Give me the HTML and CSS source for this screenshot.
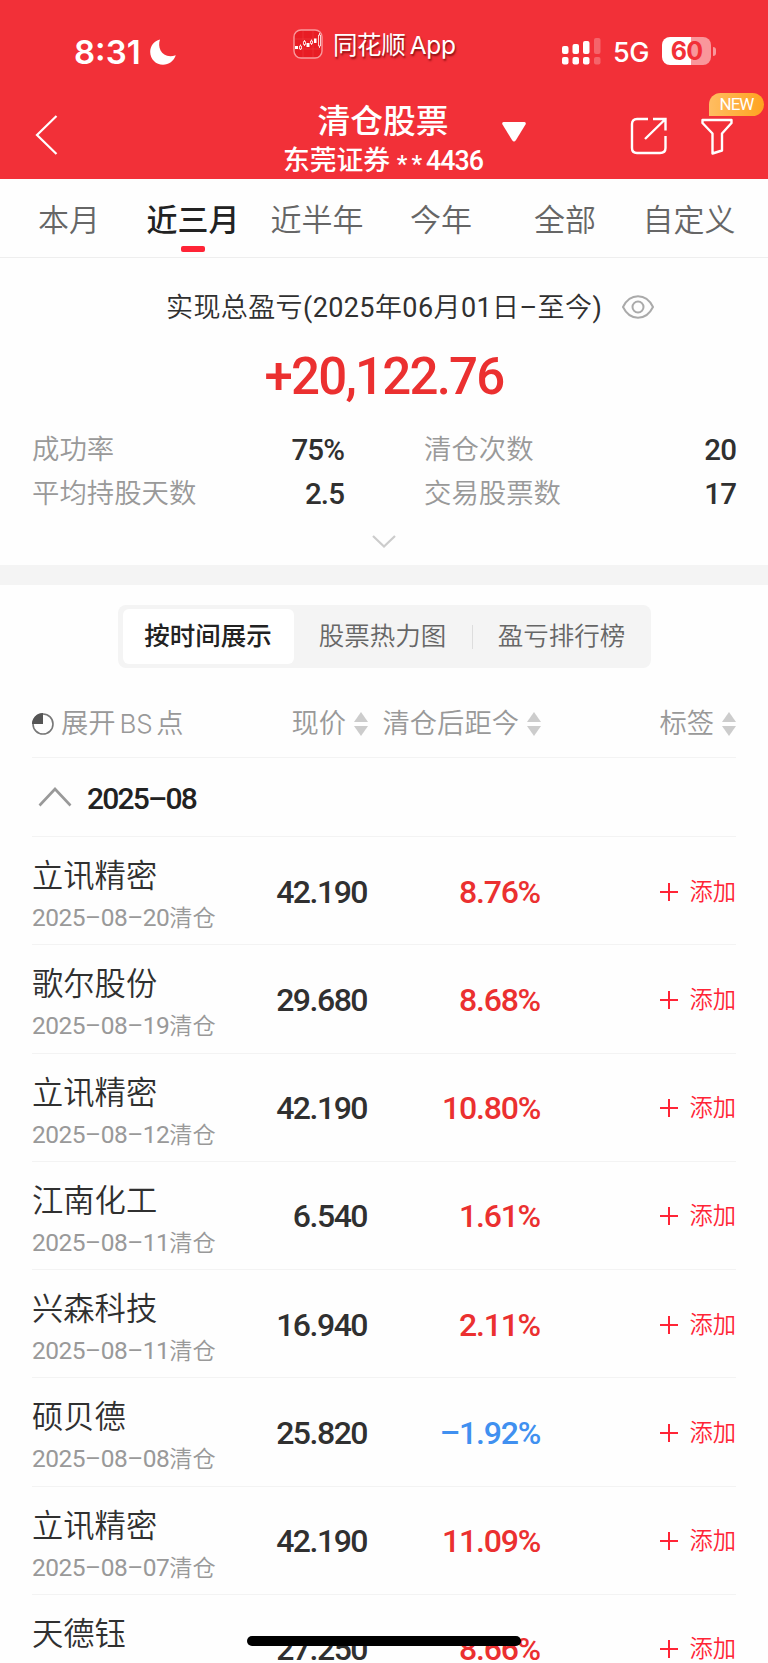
FILE: index.html
```
<!DOCTYPE html>
<html lang="zh-CN">

<head>
  <meta charset="UTF-8">
  <meta name="viewport" content="width=device-width, initial-scale=1.0">
  <title>清仓股票</title>
  <link rel="stylesheet" href="styles.css">
</head>

<body>
  <div class="page">
    <header class="header">
      <div class="status-bar">
        <div class="status-left">
          <span class="time">8:31</span>
          <svg class="moon" width="26" height="26" viewBox="0 0 26 26">
            <path d="M10 0.5C7 8.5 12 20.5 25.8 16.3C23.8 22.2 18.8 25.8 13 25.8C6 25.8 0.2 20.2 0.2 13C0.2 7 4 2 10 0.5Z" fill="#fff" />
          </svg>
        </div>
        <div class="app-mark">
          <svg width="30" height="30" viewBox="0 0 30 30" fill="none">
            <rect x="1" y="1" width="28" height="28" rx="7" fill="#e81c24" stroke="#f9999c" stroke-width="1.4" />
            <path d="M2 10H28M2 20H28M10 2V28M20 2V28" stroke="#ef3c42" stroke-width=".6" />
            <path d="M2 17h3v3h-3zM13.500 14h3v4h-3zM21 9.500h2.500v4.500h-2.500z" fill="#fff" />
            <path d="M7.500 15.500V21M11.500 11V17M18.500 10.500V16M26.500 4V19" stroke="#fff" stroke-width=".8" />
            <path d="M6.500 17h2v3h-2zM10.500 12.500h2v3h-2zM17.500 12h2v2.500h-2zM25.500 6h2v11h-2z" fill="#e81c24" stroke="#fff" stroke-width=".8" />
          </svg>
          <span class="app-name">同花顺 App</span>
        </div>
        <div class="status-right">
          <svg width="39" height="28" viewBox="0 0 39 28" fill="#fff">
            <rect x="0" y="9" width="6.500" height="8" rx="2" />
            <rect x="10.500" y="7" width="6.500" height="10" rx="2" />
            <rect x="21" y="4" width="6.500" height="13" rx="2" />
            <rect x="0" y="20" width="6.500" height="7.500" rx="2" />
            <rect x="10.500" y="20" width="6.500" height="7.500" rx="2" />
            <rect x="21" y="20" width="6.500" height="7.500" rx="2" />
            <g opacity=".25">
              <rect x="32" y="1" width="6.500" height="16" rx="2" />
              <rect x="32" y="20" width="6.500" height="7.500" rx="2" />
            </g>
          </svg>
          <span class="network">5G</span>
          <div class="battery">60</div>
          <div class="battery-cap"></div>
        </div>
      </div>

      <div class="nav-bar">
        <svg class="back" width="23" height="40" viewBox="0 0 23 40" fill="none" stroke="#fff" stroke-width="2.2">
          <path d="M21.500 1L2 20L21.500 39" />
        </svg>
        <div class="nav-title">
          <h1>清仓股票</h1>
          <p>东莞证券 <span class="stars">**</span><span class="account">4436</span></p>
        </div>
        <svg class="dropdown" width="24" height="20" viewBox="0 0 24 20">
          <path d="M1.500 0H22.500Q24.500 .5 23.500 2.500L14 18Q12 21 10 18L.5 2.500Q-.5 .5 1.500 0Z" fill="#fff" />
        </svg>
        <svg class="share" width="38" height="38" viewBox="0 0 38 38" fill="none" stroke="#fff" stroke-width="2.4">
          <path d="M18 2H7Q2 2 2 7V31Q2 36 7 36H30Q35.500 36 35.500 31V19M23 2H35.500V13.500M35 2.500L15 22" />
        </svg>
        <div class="filter">
          <svg width="32" height="37" viewBox="0 0 32 37" fill="none" stroke="#fff" stroke-width="2.4" stroke-linejoin="round">
            <path d="M1.500 2H30.500V5L21 15.500V32.500L11.500 35.500V15.500L1.500 5Z" />
          </svg>
          <span class="badge">NEW</span>
        </div>
      </div>
    </header>

    <nav class="tabs">
      <div class="tab">本月</div>
      <div class="tab active">近三月</div>
      <div class="tab">近半年</div>
      <div class="tab">今年</div>
      <div class="tab">全部</div>
      <div class="tab">自定义</div>
    </nav>

    <section class="summary">
      <div class="summary-label">
        <span class="summary-text">实现总盈亏<i>(2025</i>年<i>06</i>月<i>01</i>日<i>–</i>至今<i>)</i></span>
        <svg width="32" height="24" viewBox="0 0 32 24" fill="none" stroke="#aaa" stroke-width="2">
          <path d="M1 12C8 -2.300 24 -2.300 31 12C24 26.300 8 26.300 1 12Z" />
          <circle cx="16" cy="12" r="5.500" />
        </svg>
      </div>
      <div class="total">+20,122.76</div>
      <div class="stats">
        <div class="stat"><span>成功率</span><b>75%</b></div>
        <div class="stat"><span>清仓次数</span><b>20</b></div>
        <div class="stat"><span>平均持股天数</span><b>2.5</b></div>
        <div class="stat"><span>交易股票数</span><b>17</b></div>
      </div>
      <svg class="more" width="24" height="13" viewBox="0 0 24 13" fill="none" stroke="#ccc" stroke-width="2.2">
        <path d="M1 1L12 11.500L23 1" />
      </svg>
    </section>

    <section class="records">
      <div class="segment">
        <div class="segment-item selected">按时间展示</div>
        <div class="segment-item">股票热力图</div>
        <div class="segment-line"></div>
        <div class="segment-item">盈亏排行榜</div>
      </div>

      <div class="row table-head">
        <div class="expand">
          <svg width="22" height="22" viewBox="0 0 22 22">
            <circle cx="11" cy="11" r="10" fill="none" stroke="#777" stroke-width="1.6" />
            <path d="M11 11V0A11 11 0 0 0 0 11Z" fill="#555" />
          </svg>
          <span class="expand-text">展开<i>BS</i>点</span>
        </div>
        <div class="sortable">现价<span class="sort"></span></div>
        <div class="sortable">清仓后距今<span class="sort"></span></div>
        <div class="sortable">标签<span class="sort"></span></div>
      </div>

      <div class="month">
        <svg width="34" height="20" viewBox="0 0 34 20" fill="none" stroke="#999" stroke-width="2.6">
          <path d="M1.500 18.500L17 2L32.500 18.500" />
        </svg>
        <span>2025–08</span>
      </div>

      <div class="row stock">
        <div>
          <div class="name">立讯精密</div>
          <div class="date">2025–08–20<span>清仓</span></div>
        </div>
        <div class="num">42.190</div>
        <div class="num up">8.76%</div>
        <div class="add"><span class="plus"></span>添加</div>
      </div>
      <div class="row stock">
        <div>
          <div class="name">歌尔股份</div>
          <div class="date">2025–08–19<span>清仓</span></div>
        </div>
        <div class="num">29.680</div>
        <div class="num up">8.68%</div>
        <div class="add"><span class="plus"></span>添加</div>
      </div>
      <div class="row stock">
        <div>
          <div class="name">立讯精密</div>
          <div class="date">2025–08–12<span>清仓</span></div>
        </div>
        <div class="num">42.190</div>
        <div class="num up">10.80%</div>
        <div class="add"><span class="plus"></span>添加</div>
      </div>
      <div class="row stock">
        <div>
          <div class="name">江南化工</div>
          <div class="date">2025–08–11<span>清仓</span></div>
        </div>
        <div class="num">6.540</div>
        <div class="num up">1.61%</div>
        <div class="add"><span class="plus"></span>添加</div>
      </div>
      <div class="row stock">
        <div>
          <div class="name">兴森科技</div>
          <div class="date">2025–08–11<span>清仓</span></div>
        </div>
        <div class="num">16.940</div>
        <div class="num up">2.11%</div>
        <div class="add"><span class="plus"></span>添加</div>
      </div>
      <div class="row stock">
        <div>
          <div class="name">硕贝德</div>
          <div class="date">2025–08–08<span>清仓</span></div>
        </div>
        <div class="num">25.820</div>
        <div class="num down">–1.92%</div>
        <div class="add"><span class="plus"></span>添加</div>
      </div>
      <div class="row stock">
        <div>
          <div class="name">立讯精密</div>
          <div class="date">2025–08–07<span>清仓</span></div>
        </div>
        <div class="num">42.190</div>
        <div class="num up">11.09%</div>
        <div class="add"><span class="plus"></span>添加</div>
      </div>
      <div class="row stock">
        <div>
          <div class="name">天德钰</div>
        </div>
        <div class="num">27.250</div>
        <div class="num up">8.66%</div>
        <div class="add"><span class="plus"></span>添加</div>
      </div>
    </section>

    <div class="home-bar"></div>
  </div>
</body>

</html>
```
FILE: styles.css
```
* {
  box-sizing: border-box;
}

body {
  margin: 0;
  background-color: #fff;
  color: #303030;
  font-family: Roboto, "Noto Sans CJK SC", sans-serif;
}

svg {
  display: block;
  flex-shrink: 0;
}

.page {
  position: relative;
  width: 768px;
  height: 1663px;
  overflow: hidden;
  background-color: #fefefe;
}

/* header */
.header {
  height: 179px;
  background-color: #f23038;
  color: #fff;
}

.status-bar {
  display: flex;
  height: 85px;
}

.status-left {
  display: flex;
  width: 293px;
  padding: 31px 0 0 74px;
}

.time {
  width: 76px;
  font: 600 33px/42px Inter, sans-serif;
}

.moon {
  margin-top: 8px;
}

.app-mark {
  display: flex;
  width: 269px;
  padding-top: 29px;
}

.app-name {
  margin-left: 10px;
  font: 24.5px/32px Inter, "Noto Sans CJK SC", sans-serif;
  letter-spacing: -0.4px;
  word-spacing: -2px;
  text-shadow: 1px 2px 2px rgba(90, 0, 0, 0.7);
  white-space: nowrap;
}

.status-right {
  display: flex;
  align-items: center;
  height: 28px;
  margin-top: 37px;
}

.network {
  width: 48px;
  margin-left: 12px;
  margin-right: 1px;
  padding-top: 3px;
  font: 500 27px/28px Inter, sans-serif;
  letter-spacing: -0.4px;
}

.battery {
  width: 49px;
  height: 28px;
  border-radius: 8px;
  background: linear-gradient(90deg, #fff 60%, #f9979b 60%);
  color: #f23038;
  font: 700 25px/28px Inter, sans-serif;
  letter-spacing: -0.8px;
  text-align: center;
}

.battery-cap {
  width: 3px;
  height: 9px;
  margin-left: 2px;
  border-radius: 0 4px 4px 0;
  background-color: #f9979b;
}

.nav-bar {
  display: flex;
  height: 94px;
}

.back {
  margin: 30px 0 0 35px;
}

.nav-title {
  width: 206px;
  margin-left: 222px;
  margin-right: 1px;
  padding-top: 18px;
  text-align: center;
  white-space: nowrap;
}

.nav-title h1 {
  margin: 0;
  font-size: 32.8px;
  font-weight: 500;
  line-height: 39px;
}

.nav-title p {
  margin: 0;
  font-size: 26.8px;
  font-weight: 500;
  line-height: 38px;
}

.stars {
  font-size: 24px;
  letter-spacing: 4px;
  vertical-align: -2px;
  line-height: 1;
}

.account {
  letter-spacing: -1px;
}

.dropdown {
  margin: 37px 0 0 15px;
}

.share {
  margin: 32px 0 0 104px;
}

.filter {
  position: relative;
  margin: 33px 0 0 33px;
}

.badge {
  position: absolute;
  left: 8px;
  top: -25px;
  width: 55px;
  height: 23px;
  border-radius: 12px 12px 12px 0;
  background: linear-gradient(90deg, #ffbd62, #ffa31f);
  font-size: 17px;
  letter-spacing: -1px;
  line-height: 23px;
  text-align: center;
}

/* period tabs */
.tabs {
  display: flex;
  height: 79px;
  padding: 0 17px 0 7px;
  border-bottom: 1px solid #eee;
}

.tab {
  display: flex;
  flex-direction: column;
  align-items: center;
  flex: 1;
  padding-top: 20px;
  color: #666;
  font-size: 31px;
  font-weight: 350;
  line-height: 44px;
  white-space: nowrap;
}

.tab.active {
  color: #222;
  font-weight: 500;
}

.tab.active::after {
  content: "";
  width: 24px;
  height: 6px;
  margin-top: 3px;
  border-radius: 2px;
  background-color: #ff2436;
}

/* profit summary */
.summary {
  height: 327px;
  padding: 29px 32px 0;
  border-bottom: 20px solid #f4f4f4;
}

.summary-label {
  display: flex;
  align-items: center;
  height: 40px;
  padding-left: 134px;
}

.summary-text {
  width: 456px;
  padding-bottom: 4px;
  font-size: 27px;
  font-weight: 350;
  letter-spacing: 0.4px;
  white-space: nowrap;
}

.summary-text i {
  font-style: normal;
  font-weight: 400;
}

.total {
  margin-top: 18px;
  color: #eb3030;
  font-size: 51px;
  font-weight: 500;
  letter-spacing: -1.8px;
  line-height: 63px;
  text-align: center;
}

.stats {
  display: grid;
  grid-template-columns: 312px 312px;
  column-gap: 80px;
  margin-top: 21px;
}

.stat {
  display: flex;
  justify-content: space-between;
  height: 43.5px;
  line-height: 43px;
}

.stat span {
  color: #999;
  font-size: 27.4px;
  font-weight: 350;
}

.stat b {
  font-size: 29.5px;
  font-weight: 500;
  letter-spacing: -0.9px;
}

.more {
  margin: 19px auto 0;
}

/* segment control */
.records {
  padding: 20px 32px 0;
}

.segment {
  display: flex;
  align-items: center;
  width: 533px;
  height: 63px;
  margin: 0 auto;
  padding: 4px 0 4px 5px;
  border-radius: 8px;
  background-color: #f4f4f4;
}

.segment-item {
  flex: 1;
  color: #666;
  font-size: 25.5px;
  font-weight: 350;
  line-height: 55px;
  text-align: center;
}

.segment-item.selected {
  flex: none;
  width: 171px;
  border-radius: 6px;
  background-color: #fff;
  color: #222;
  font-weight: 500;
}

.segment-line {
  width: 1px;
  height: 24px;
  background-color: #ddd;
}

/* table */
.row {
  display: grid;
  grid-template-columns: 213px 123px 173px 195px;
  align-items: center;
  border-bottom: 1px solid #f3f3f3;
}

.table-head {
  height: 90px;
  padding-top: 23px;
  color: #999;
  font-size: 27.3px;
  font-weight: 350;
  line-height: 40px;
  white-space: nowrap;
}

.expand {
  display: flex;
  align-items: center;
}

.expand-text {
  margin-left: 7px;
}

.expand-text i {
  padding: 0 4px;
  font-family: Inter, sans-serif;
  font-size: 26px;
  font-style: normal;
  letter-spacing: -0.3px;
}

.sortable {
  display: flex;
  align-items: center;
  justify-content: flex-end;
}

.sort {
  display: flex;
  flex-direction: column;
  gap: 4px;
  margin-left: 8px;
}

.sort::before,
.sort::after {
  content: "";
  border: 7px solid transparent;
}

.sort::before {
  border-top: 0;
  border-bottom: 10.5px solid #ccc;
}

.sort::after {
  border-top: 10.5px solid #ccc;
  border-bottom: 0;
}

.month {
  display: flex;
  align-items: center;
  height: 79px;
  padding-left: 6px;
  border-bottom: 1px solid #f3f3f3;
  color: #222;
  font-size: 30px;
  font-weight: 500;
}

.month span {
  margin-left: 15px;
  padding-top: 3px;
  letter-spacing: -1.8px;
}

.stock {
  height: 108.25px;
}

.stock > div:first-child {
  align-self: start;
  padding-top: 18px;
}

.name {
  font-size: 31.3px;
  font-weight: 350;
  line-height: 44px;
}

.date {
  color: #999;
  font-size: 24.5px;
  font-weight: 400;
  letter-spacing: -0.5px;
  line-height: 38px;
  white-space: nowrap;
}

.date span {
  font-size: 23.2px;
  font-weight: 350;
  letter-spacing: 0;
}

.num {
  padding: 2px 1px 0 0;
  font-size: 32px;
  font-weight: 500;
  letter-spacing: -1.5px;
  line-height: 40px;
  text-align: right;
}

.up,
.down {
  letter-spacing: -1.2px;
}

.up {
  color: #eb3030;
}

.down {
  color: #4090f0;
}

.add {
  display: flex;
  align-items: center;
  justify-content: flex-end;
  padding-top: 2px;
  color: #ff2436;
  font-size: 23.3px;
  font-weight: 350;
  line-height: 34px;
}

.plus {
  width: 18px;
  height: 18px;
  margin-right: 11px;
  background:
    linear-gradient(#ff2436, #ff2436) center / 18px 2px no-repeat,
    linear-gradient(#ff2436, #ff2436) center / 2px 18px no-repeat;
}

.home-bar {
  position: absolute;
  left: 247px;
  top: 1636px;
  width: 274px;
  height: 10px;
  border-radius: 5px;
  background-color: #000;
}
```
